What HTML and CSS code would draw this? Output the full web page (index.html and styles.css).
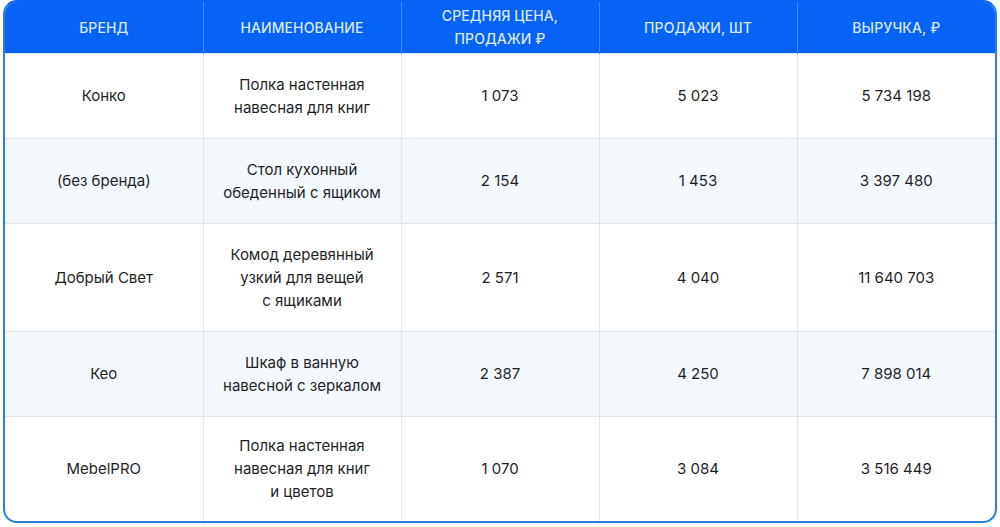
FILE: index.html
```html
<!DOCTYPE html>
<html lang="ru">
<head>
<meta charset="utf-8">
<link rel="stylesheet" href="styles.css">
</head>
<body>
<div class="page">
  <div class="card">
    <table class="tbl">
      <thead>
        <tr class="head">
          <th>Бренд</th>
          <th>Наименование</th>
          <th>Средняя цена,<br>продажи ₽</th>
          <th>Продажи, шт</th>
          <th>Выручка, ₽</th>
        </tr>
      </thead>
      <tbody>
        <tr class="r2">
          <td>Конко</td>
          <td>Полка настенная<br>навесная для книг</td>
          <td>1 073</td>
          <td>5 023</td>
          <td>5 734 198</td>
        </tr>
        <tr class="r2 alt">
          <td>(без бренда)</td>
          <td>Стол кухонный<br>обеденный с ящиком</td>
          <td>2 154</td>
          <td>1 453</td>
          <td>3 397 480</td>
        </tr>
        <tr class="r3">
          <td>Добрый Свет</td>
          <td>Комод деревянный<br>узкий для вещей<br>с ящиками</td>
          <td>2 571</td>
          <td>4 040</td>
          <td>11 640 703</td>
        </tr>
        <tr class="r2 alt">
          <td>Кео</td>
          <td>Шкаф в ванную<br>навесной с зеркалом</td>
          <td>2 387</td>
          <td>4 250</td>
          <td>7 898 014</td>
        </tr>
        <tr class="r3 last">
          <td>MebelPRO</td>
          <td>Полка настенная<br>навесная для книг<br>и цветов</td>
          <td>1 070</td>
          <td>3 084</td>
          <td>3 516 449</td>
        </tr>
      </tbody>
    </table>
  </div>
</div>
</body>
</html>
```
FILE: styles.css
```css
html, body {
  margin: 0;
  padding: 0;
  background: #ffffff;
}
.page {
  padding: 0 3px 0 3px;
  font-family: Inter, "Noto Sans", sans-serif;
}
.card {
  border: 2px solid #2c80d8;
  border-top-color: #0a62f5;
  border-radius: 14px;
  overflow: hidden;
  height: 519px;
  background: #ffffff;
}
.tbl {
  width: 100%;
  border-collapse: collapse;
  table-layout: fixed;
}
.tbl th, .tbl td {
  text-align: center;
  vertical-align: middle;
  padding: 0 8px;
  line-height: 23px;
}
.head {
  height: 51px;
  background: #0762f6;
}
.head th {
  color: #d8e8ff;
  font-weight: 500;
  font-size: 14px;
  text-transform: uppercase;
  border-left: 1px solid #3d8cf7;
  letter-spacing: 0.1px;
}
.head th:first-child {
  border-left: none;
}
.tbl td {
  font-size: 15px;
  color: #1f1f1f;
  border-left: 1px solid #dfe6ee;
  border-top: 1px solid #dfe6ee;
}
.tbl td:first-child {
  border-left: none;
}
.r2 {
  height: 85px;
}
.r3 {
  height: 108px;
}
.last {
  height: 105px;
}
.alt td {
  background: #f4f9fe;
}
```
